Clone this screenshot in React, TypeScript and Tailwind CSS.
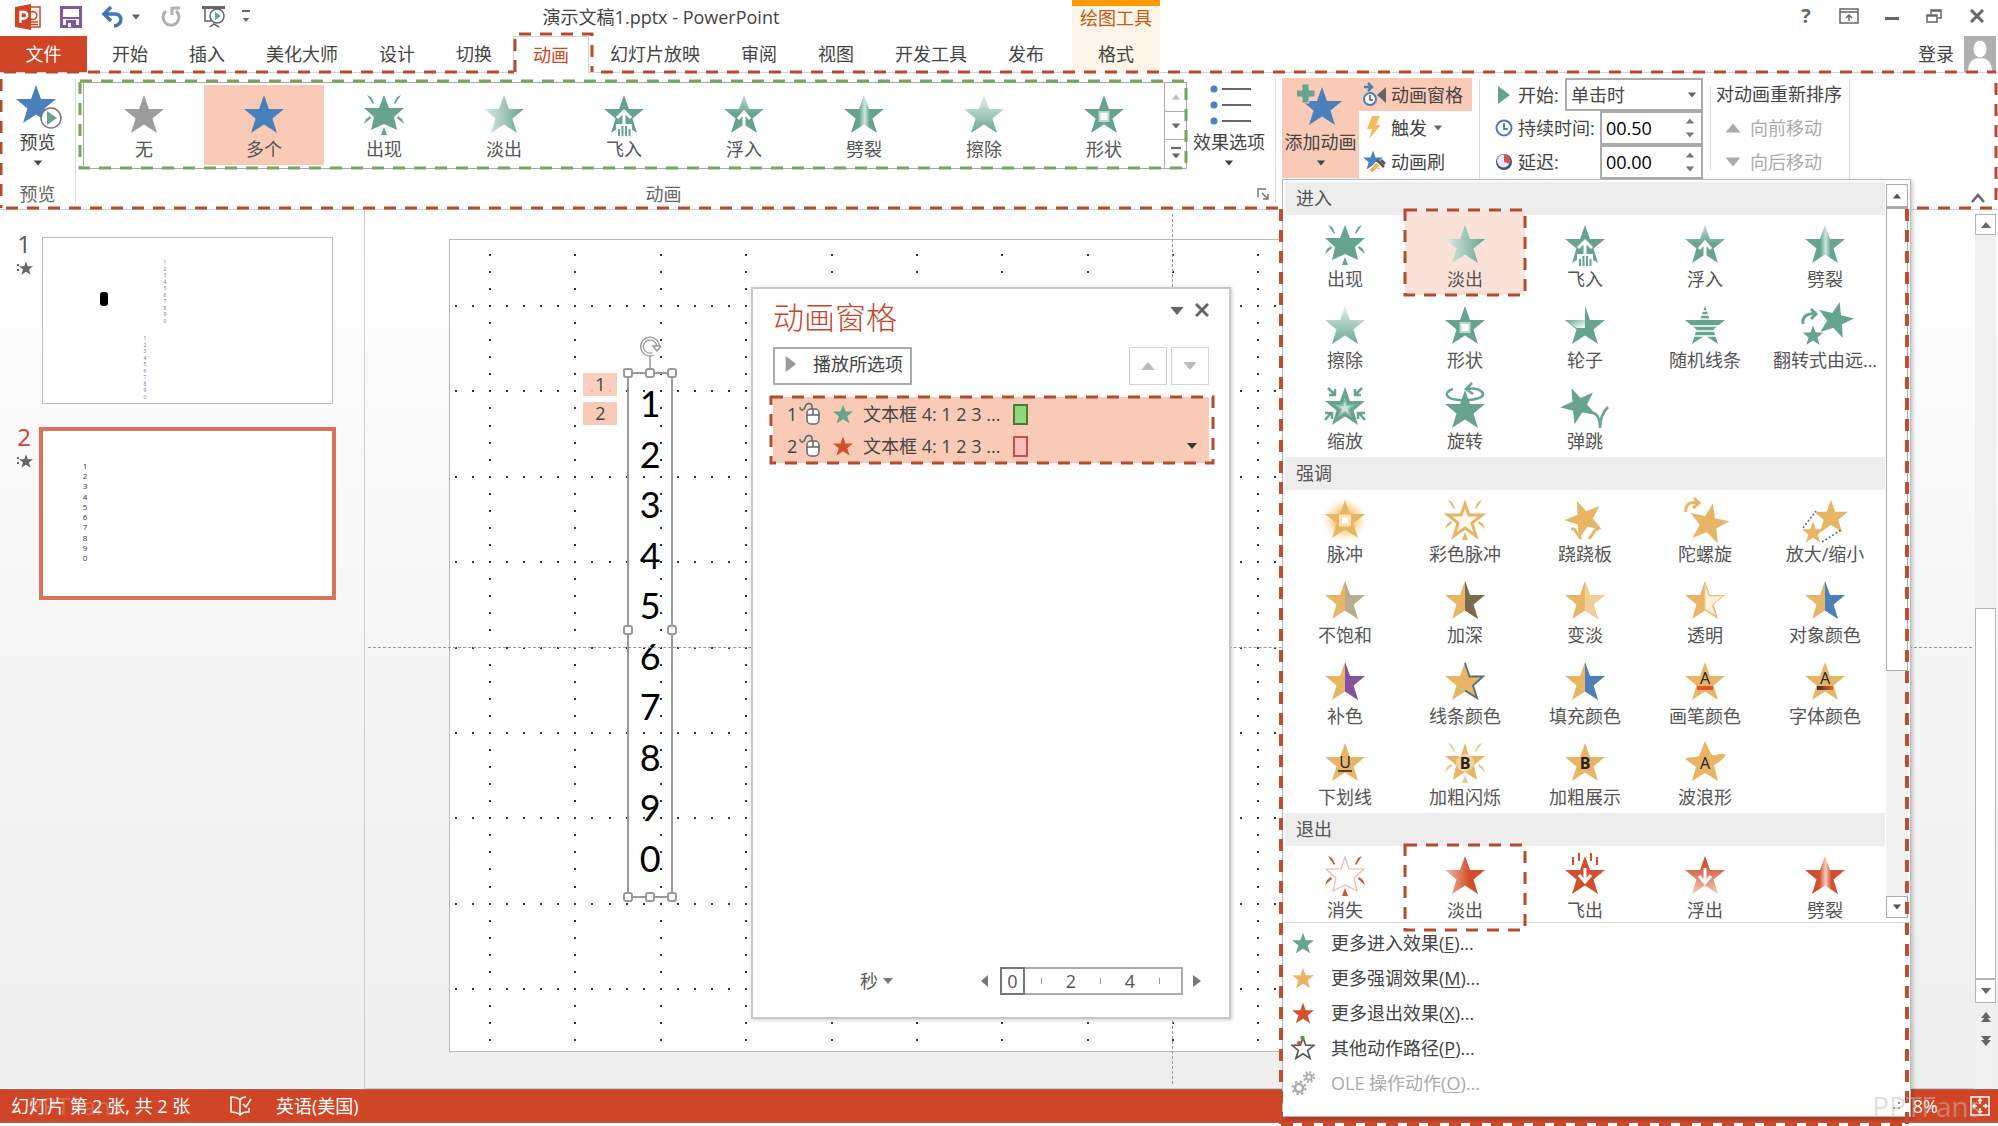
import { Fragment, type ReactNode } from "react";
import clsx from "clsx";

const STAR = "M20 1 L25 15 H40 L28.5 24.5 L33 39 L20 30.5 L7 39 L11.5 24.5 L0 15 H15 Z";
const RIGHT_HALF = "M20 1 L25 15 H40 L28.5 24.5 L33 39 L20 30.5 Z";

const GREEN = "#66a48f";
const GOLD = "#e8b565";
const RED = "#d2502e";
const BLUE = "#4a80bb";

type Effect = { label: string; icon: string };

const gallery: Effect[] = [
  { label: "无", icon: "none" },
  { label: "多个", icon: "multiple" },
  { label: "出现", icon: "appear" },
  { label: "淡出", icon: "fade" },
  { label: "飞入", icon: "flyIn" },
  { label: "浮入", icon: "floatIn" },
  { label: "劈裂", icon: "split" },
  { label: "擦除", icon: "wipe" },
  { label: "形状", icon: "shape" },
];

const entrance: Effect[] = [
  ...gallery.slice(2),
  { label: "轮子", icon: "wheel" },
  { label: "随机线条", icon: "bars" },
  { label: "翻转式由远...", icon: "growTurn" },
  { label: "缩放", icon: "zoom" },
  { label: "旋转", icon: "swivel" },
  { label: "弹跳", icon: "bounce" },
];

const emphasis: Effect[] = [
  { label: "脉冲", icon: "pulse" },
  { label: "彩色脉冲", icon: "colorPulse" },
  { label: "跷跷板", icon: "teeter" },
  { label: "陀螺旋", icon: "spin" },
  { label: "放大/缩小", icon: "growShrink" },
  { label: "不饱和", icon: "desaturate" },
  { label: "加深", icon: "darken" },
  { label: "变淡", icon: "lighten" },
  { label: "透明", icon: "transparency" },
  { label: "对象颜色", icon: "objectColor" },
  { label: "补色", icon: "complementary" },
  { label: "线条颜色", icon: "lineColor" },
  { label: "填充颜色", icon: "objectColor" },
  { label: "画笔颜色", icon: "brushColor" },
  { label: "字体颜色", icon: "fontColor" },
  { label: "下划线", icon: "underline" },
  { label: "加粗闪烁", icon: "boldFlash" },
  { label: "加粗展示", icon: "boldReveal" },
  { label: "波浪形", icon: "wave" },
];

const exit: Effect[] = [
  { label: "消失", icon: "disappear" },
  { label: "淡出", icon: "fadeOut" },
  { label: "飞出", icon: "flyOut" },
  { label: "浮出", icon: "floatOut" },
  { label: "劈裂", icon: "splitOut" },
];

const moreEffects = [
  { label: "更多进入效果", hotkey: "E", color: GREEN },
  { label: "更多强调效果", hotkey: "M", color: GOLD },
  { label: "更多退出效果", hotkey: "X", color: RED },
  { label: "其他动作路径", hotkey: "P", color: "path" },
  { label: "OLE 操作动作", hotkey: "O", color: "ole" },
];

const tabs = ["开始", "插入", "美化大师", "设计", "切换", "动画", "幻灯片放映", "审阅", "视图", "开发工具", "发布"];
const digits = ["1", "2", "3", "4", "5", "6", "7", "8", "9", "0"];

const Gradients = () => (
  <svg className="absolute size-0" aria-hidden="true">
    <defs>
      <linearGradient id="fade"><stop offset="0" stopColor="#dcebe6" /><stop offset="1" stopColor={GREEN} /></linearGradient>
      <linearGradient id="wipe" x2="0" y2="1"><stop offset="0" stopColor="#e3f0ec" /><stop offset="1" stopColor="#69a692" /></linearGradient>
      <linearGradient id="float" x2="0" y2="1"><stop offset="0" stopColor="#c3ddd5" /><stop offset=".5" stopColor={GREEN} /></linearGradient>
      <linearGradient id="split">
        <stop offset=".38" stopColor={GREEN} /><stop offset=".52" stopColor="#cfe5de" /><stop offset=".64" stopColor={GREEN} />
      </linearGradient>
      <linearGradient id="wheel" x2="1" y2="1"><stop offset="0" stopColor={GREEN} /><stop offset="1" stopColor="#ffffff" /></linearGradient>
      <radialGradient id="glow"><stop offset=".4" stopColor="#f5c56a" /><stop offset="1" stopColor="#fbe3b4" stopOpacity="0" /></radialGradient>
      <linearGradient id="fadeOut"><stop offset="0" stopColor="#f3bfae" /><stop offset=".6" stopColor={RED} /></linearGradient>
      <linearGradient id="floatOut" x2="0" y2="1"><stop offset=".2" stopColor={RED} /><stop offset="1" stopColor="#f5c7b9" /></linearGradient>
      <linearGradient id="splitOut">
        <stop offset=".36" stopColor={RED} /><stop offset=".52" stopColor="#f6cdbf" /><stop offset=".66" stopColor={RED} />
      </linearGradient>
      <linearGradient id="brush"><stop offset="0" stopColor="#333333" /><stop offset="1" stopColor="#e2603a" /></linearGradient>
    </defs>
  </svg>
);

const Rays = ({ color }: { color: string }) => (
  <path
    fill={color}
    d="M3 1 L7 3 L10 9 L9 10 Z M37 1 L33 3 L30 9 L31 10 Z M0 30 L2 25 L6 22 L7 24 Z M40 30 L38 25 L34 22 L33 24 Z M17 41 L20 33 L23 41 Z"
  />
);

const Letter = ({ children, bold, y = 27 }: { children: string; bold?: boolean; y?: number }) => (
  <text x="20" y={y} textAnchor="middle" fontSize="16" fontWeight={bold ? 700 : 400} fill="#222" fontFamily="Open Sans, sans-serif">
    {children}
  </text>
);

const half = (color: string) => (
  <>
    <path d={STAR} fill={GOLD} />
    <path d={RIGHT_HALF} fill={color} />
  </>
);

const drawings: Record<string, ReactNode> = {
  none: <path d={STAR} fill="#9d9d9d" />,
  multiple: <path d={STAR} fill={BLUE} />,
  appear: (
    <>
      <path d="M20 1 L25 14 H40 L30 23 L33 36 L20 30 L7 36 L10 23 L0 14 H15 Z" fill={GREEN} />
      <Rays color={GREEN} />
    </>
  ),
  fade: <path d={STAR} fill="url(#fade)" />,
  flyIn: (
    <>
      <path d={STAR} fill={GREEN} />
      <path d="M13 24 L20 17 L27 24 M20 18 V34" stroke="#fff" strokeWidth="3" fill="none" />
      <path d="M12 30 h16 v12 h-16 Z" fill="#fff" />
      <path d="M15 35 V42 M18.500 32 V42 M22 32 V42 M25.500 35 V42" stroke={GREEN} strokeWidth="2" />
    </>
  ),
  floatIn: (
    <>
      <path d={STAR} fill="url(#float)" />
      <path d="M14 25 L20 18 L26 25 M20 19 V33" stroke="#fff" strokeWidth="3" fill="none" />
    </>
  ),
  split: <path d={STAR} fill="url(#split)" />,
  wipe: <path d={STAR} fill="url(#wipe)" />,
  shape: (
    <>
      <path d={STAR} fill={GREEN} />
      <path d="M15.500 18 h9 v9 h-9 Z" fill="#fff" stroke="#b9d8ce" strokeWidth="2" />
    </>
  ),
  wheel: (
    <>
      <path d={STAR} fill={GREEN} />
      <path d="M20 0 V23 L10 20 L0 14 H14 Z" fill="#fff" />
      <path d="M20 23 L11.500 23 L0 15 H20 Z" fill="url(#wheel)" />
    </>
  ),
  bars: (
    <>
      <path d={STAR} fill={GREEN} />
      <path d="M0 6 H40 M0 10 H40 M0 14 H40 M0 21 H40 M0 26 H40 M0 31 H40" stroke="#fff" strokeWidth="1.600" />
    </>
  ),
  growTurn: (
    <>
      <path d={STAR} fill={GREEN} transform="translate(12 -4) rotate(14 20 20) scale(.9)" />
      <path d={STAR} fill={GREEN} stroke="#fff" strokeWidth="2" transform="translate(-4 18) scale(.6)" />
      <path d="M-2 19 C-3 12 2 8 9 9 M6 4 L11 9 L6 14" fill="none" stroke={GREEN} strokeWidth="3" />
    </>
  ),
  zoom: (
    <>
      <path d={STAR} fill={GREEN} />
      <path d={STAR} fill="#cfe3dc" stroke="#8dbfae" strokeWidth="4" transform="translate(11.500 13) scale(.42)" />
      <path
        d="M3 2 L10 9 M10 3 V9 H4 M37 2 L30 9 M30 3 V9 H36 M0 34 L6 27 M0 27 H7 V33 M40 34 L34 27 M40 27 H33 V33"
        fill="none"
        stroke={GREEN}
        strokeWidth="2.500"
      />
    </>
  ),
  swivel: (
    <>
      <path d={STAR} fill={GREEN} transform="translate(0 3)" />
      <path d="M8 3 C-2 6 0 13 14 14 C30 15 42 11 37 6 C34 3 28 2 22 3 M27 -3 L21 3 L28 8" fill="none" stroke={GREEN} strokeWidth="2.500" />
    </>
  ),
  bounce: (
    <>
      <path d={STAR} fill={GREEN} transform="translate(-4 -1) rotate(-24 20 20) scale(.9)" />
      <path d="M24 26 C32 26 35 32 35 42 C35 34 38 26 43 21" fill="none" stroke={GREEN} strokeWidth="2.500" />
    </>
  ),
  pulse: (
    <>
      <circle cx="20" cy="21" r="22" fill="url(#glow)" />
      <path d={STAR} fill={GOLD} />
      <path d="M15.500 17 h9 v9 h-9 Z" fill="#fff" stroke="#fbe3b4" strokeWidth="3" />
    </>
  ),
  colorPulse: (
    <>
      <path d="M20 5 L24 16 H37 L27 24 L31 37 L20 29 L9 37 L13 24 L3 16 H16 Z" fill="#fffaf0" stroke={GOLD} strokeWidth="3" />
      <Rays color={GOLD} />
    </>
  ),
  teeter: (
    <>
      <path d={STAR} fill={GOLD} transform="translate(0 -1) rotate(-22 20 20) scale(.95)" />
      <path d="M6 30 L9 30 L16 40 M34 30 L31 30 L24 40" fill="none" stroke={GOLD} strokeWidth="3" />
    </>
  ),
  spin: (
    <>
      <path d={STAR} fill={GOLD} transform="translate(4 3) rotate(12 20 20)" />
      <path d="M1 13 C0 6 5 2 12 4 M9 -1 L14 4 L8 9" fill="none" stroke={GOLD} strokeWidth="3" />
    </>
  ),
  growShrink: (
    <>
      <path d={STAR} fill={GOLD} transform="translate(9 0) scale(.85)" />
      <path d={STAR} fill={GOLD} transform="translate(-3 22) scale(.55)" />
      <path d="M-2 29 L11 12 M17 43 L36 31" stroke="#666" strokeWidth="1.500" strokeDasharray="2 2" />
    </>
  ),
  desaturate: half("#b8ac93"),
  darken: half("#7b6a4f"),
  lighten: half("#f3cf98"),
  transparency: (
    <>
      <path d={STAR} fill={GOLD} />
      <path d="M20 4 L24 16 H38 L27 25 L31 36 L20 29 Z" fill="#fdf0dc" stroke="#f0cd96" />
    </>
  ),
  objectColor: half(BLUE),
  complementary: half("#8552a1"),
  lineColor: (
    <>
      <path d={STAR} fill={GOLD} />
      <path d="M20 2 L24.500 15.500 H38 L28 24.500 L32 37 L20 29.500" fill="none" stroke="#4f7078" strokeWidth="1.800" />
    </>
  ),
  brushColor: (
    <>
      <path d={STAR} fill={GOLD} />
      <Letter y={23}>A</Letter>
      <path d="M12 25 h16 v4 h-16 Z" fill="#dd5631" />
    </>
  ),
  fontColor: (
    <>
      <path d={STAR} fill={GOLD} />
      <Letter y={23}>A</Letter>
      <path d="M12 25 h16 v4 h-16 Z" fill="url(#brush)" />
    </>
  ),
  underline: (
    <>
      <path d={STAR} fill={GOLD} />
      <Letter y={26}>U</Letter>
      <path d="M13 29 H27" stroke="#222" strokeWidth="1.500" />
    </>
  ),
  boldFlash: (
    <>
      <path d="M20 1 L24 14 H40 L29 23 L32 38 L20 30 L8 38 L11 23 L0 14 H16 Z" fill={GOLD} />
      <Rays color="#edc88d" />
      <circle cx="20" cy="21" r="9" fill="#f8e0b4" opacity=".7" />
      <Letter bold>B</Letter>
    </>
  ),
  boldReveal: (
    <>
      <path d={STAR} fill={GOLD} />
      <Letter bold>B</Letter>
    </>
  ),
  wave: (
    <>
      <path d="M20 -1 L26 12 C31 16 34 9 41 13 C38 17 35 20 29 23 L33 39 L20 31 L7 39 L11 25 L0 17 C6 14 10 16 14 14 Z" fill={GOLD} />
      <Letter>A</Letter>
    </>
  ),
  disappear: (
    <>
      <path d="M20 2 L24 14 H39 L29 23 L32 36 L20 30 L8 36 L11 23 L1 14 H16 Z" fill="#fff" stroke="#edb8a9" strokeWidth="1.200" />
      <Rays color={RED} />
    </>
  ),
  fadeOut: <path d={STAR} fill="url(#fadeOut)" />,
  flyOut: (
    <>
      <path d={STAR} fill={RED} />
      <path d="M20 13 V26 M14 20 L20 27 L26 20" stroke="#fff" strokeWidth="3" fill="none" />
      <path d="M8 2 V10 M14 -2 V6 M26 -2 V6 M32 2 V10" stroke={RED} strokeWidth="2" />
    </>
  ),
  floatOut: (
    <>
      <path d={STAR} fill="url(#floatOut)" />
      <path d="M20 13 V27 M14 21 L20 28 L26 21" stroke="#fff" strokeWidth="3" fill="none" />
    </>
  ),
  splitOut: <path d={STAR} fill="url(#splitOut)" />,
};

const EffectIcon = ({ name }: { name: string }) => (
  <svg viewBox="0 0 40 40" className="size-10 overflow-visible">
    {drawings[name]}
  </svg>
);

const triangles = {
  up: "M0 9 L5 3 L10 9 Z",
  down: "M0 3 L5 9 L10 3 Z",
  left: "M9 0 L2 6 L9 12 Z",
  right: "M1 0 L9 6 L1 12 Z",
};

const Triangle = ({ dir = "down", className = "size-2.5 text-[#666]" }: { dir?: keyof typeof triangles; className?: string }) => (
  <svg viewBox="0 0 10 12" className={clsx("shrink-0", className)} aria-hidden="true">
    <path d={triangles[dir]} fill="currentColor" />
  </svg>
);

const Dashed = ({ color = "#b54a2e", className = "inset-0" }: { color?: string; className?: string }) => (
  <div className={clsx("pointer-events-none absolute", className)}>
    <svg className="block size-full overflow-visible">
      <rect width="100%" height="100%" fill="none" stroke={color} strokeWidth="3" strokeDasharray="12 9" />
    </svg>
  </div>
);

const EffectButton = ({ effect, children }: { effect: Effect; children?: ReactNode }) => (
  <button className="relative flex w-full flex-col items-center pt-[9px] text-[#555]">
    {children}
    <span className="relative">
      <EffectIcon name={effect.icon} />
    </span>
    <span className="relative mt-[3px] whitespace-nowrap leading-6">{effect.label}</span>
  </button>
);

const BigButton = ({ icon, label, className }: { icon: ReactNode; label: string; className?: string }) => (
  <button className={clsx("mt-[5px] flex h-[100px] shrink-0 flex-col items-center pt-1.5", className)}>
    <svg viewBox="0 0 48 46" className="h-[46px] w-12">
      {icon}
    </svg>
    <span className="whitespace-nowrap leading-6">{label}</span>
    <Triangle className="mt-1 size-2.5" />
  </button>
);

const TitleBar = () => (
  <div className="flex h-9 items-center pb-0.5">
    <div className="flex items-center pl-[15px]">
      <svg viewBox="0 0 26 26" className="size-[26px]">
        <path d="M13 3 h12 v20 h-12 Z" fill="#fff" stroke="#d04526" strokeWidth="1.500" />
        <path d="M16 8 a4 4 0 1 1 0 7 M16 18 h7 M16 20.500 h7" stroke="#d04526" strokeWidth="1.500" fill="none" />
        <path d="M0 3 L16 0 V26 L0 23 Z" fill="#d04526" />
        <path d="M5.500 19 V8 h3.500 a3.200 3.200 0 0 1 0 6.500 h-3" fill="none" stroke="#fff" strokeWidth="2.400" />
      </svg>
      <button className="ml-[19px]" aria-label="保存">
        <svg viewBox="0 0 22 22" className="size-[22px]">
          <path d="M1.500 1.500 h19 v19 h-19 Z" fill="#fff" stroke="#7f57a2" strokeWidth="3" />
          <path d="M2 11 h18 v2 h-18 Z M6 14 h10 v7 h-10 Z" fill="#7f57a2" />
          <path d="M8 17 h3 v4 h-3 Z" fill="#fff" />
        </svg>
      </button>
      <button className="ml-[19px] flex items-center gap-1.5" aria-label="撤消">
        <svg viewBox="0 0 24 22" className="h-[22px] w-6">
          <path d="M10 1 L3 8 L10 15 M3 8 H14 C22 8 22 19 13 20" fill="none" stroke="#3f78b5" strokeWidth="3.500" />
        </svg>
        <Triangle />
      </button>
      <button className="ml-[19px]" aria-label="重复">
        <svg viewBox="0 0 22 22" className="size-[22px]">
          <path d="M6 5 A8 8 0 1 0 16 5 M12 1 V9 M12 2 H20" fill="none" stroke="#b0b0b0" strokeWidth="3" />
        </svg>
      </button>
      <button className="ml-5" aria-label="从头开始">
        <svg viewBox="0 0 24 24" className="size-6" fill="none" stroke="#666" strokeWidth="1.500">
          <path d="M0 2.500 H23" strokeWidth="3" />
          <path d="M3 4 V16 H9 M8 22 L12 19 L17 22" />
          <circle cx="15" cy="11" r="7" fill="#fff" />
          <path d="M13 7 L19 11 L13 15 Z" fill={GREEN} stroke="none" />
        </svg>
      </button>
      <button className="ml-4 flex flex-col items-center" aria-label="自定义快速访问工具栏">
        <span className="h-0.5 w-2 bg-[#666]" />
        <Triangle className="mt-1 size-2 text-[#666]" />
      </button>
    </div>
    <h1 className="flex-1 text-center font-normal">演示文稿1.pptx - PowerPoint</h1>
  </div>
);

const Header = () => (
  <header className="flex h-[73px]">
    <div className="flex flex-1 flex-col">
      <TitleBar />
      <nav className="flex h-[37px] gap-px border-b border-[#d4d4d4]">
        <button className="mr-1 w-[87px] bg-[#d04526] text-white">文件</button>
        {tabs.map((tab) => (
          <button
            key={tab}
            className={clsx(
              "whitespace-nowrap px-5",
              tab === "动画" && "-mb-px border border-b-0 border-[#d4d4d4] bg-white px-[19px] text-[#d04526]"
            )}
          >
            {tab}
          </button>
        ))}
      </nav>
    </div>
    <div className="flex w-[88px] flex-col border-t-[6px] border-[#ff9b00] bg-[#fdf5e8] text-center">
      <span className="leading-6 text-[#c55a11]">绘图工具</span>
      <button className="mt-3 leading-6">格式</button>
    </div>
    <div className="flex flex-1 flex-col border-b border-[#d4d4d4] min-[1200px]:max-w-[838px]">
      <div className="ml-auto flex h-9 items-center pb-1 text-[#666]">
        <button className="w-[42px] text-xl font-bold">?</button>
        <button className="flex w-[43px] justify-center" aria-label="功能区显示选项">
          <svg viewBox="0 0 20 16" className="h-4 w-5" fill="none" stroke="currentColor" strokeWidth="1.500">
            <path d="M1 1 h18 v14 h-18 Z M1 4 H19 M10 13 V7 M7 10 L10 7 L13 10" />
          </svg>
        </button>
        <button className="flex w-[43px] justify-center" aria-label="最小化">
          <span className="mt-1 h-[3px] w-3.5 bg-[#666]" />
        </button>
        <button className="flex w-[42px] justify-center" aria-label="还原">
          <svg viewBox="0 0 16 16" className="size-4" fill="none" stroke="currentColor" strokeWidth="1.500">
            <path d="M1 7 h10 v7 h-10 Z M1 8 H11 M5 6 V2 H15 V10 H12 M5 3 H15" />
          </svg>
        </button>
        <button className="flex w-[43px] justify-center" aria-label="关闭">
          <svg viewBox="0 0 14 14" className="size-3.5" stroke="currentColor" strokeWidth="3">
            <path d="M1 1 L13 13 M13 1 L1 13" />
          </svg>
        </button>
      </div>
      <div className="ml-auto flex items-center gap-2.5 pr-0.5">
        <a href="#login">登录</a>
        <svg viewBox="0 0 32 36" className="h-9 w-8">
          <path d="M0 0 h32 v36 h-32 Z" fill="#b0b0b0" />
          <path d="M4 36 C4 26 9 22 16 22 C23 22 28 26 28 36 Z" fill="#fff" />
          <ellipse cx="16" cy="13" rx="7" ry="9" fill="#fff" stroke="#b0b0b0" />
        </svg>
      </div>
    </div>
  </header>
);

const Spinner = ({ id, value }: { id: string; value: string }) => (
  <div className="ml-auto flex h-[34px] w-[103px] items-center border-2 border-[#ababab] bg-white">
    <input id={id} defaultValue={value} className="w-full min-w-0 bg-transparent pl-1 text-black outline-none" />
    <span className="flex flex-col gap-1 pr-1.5">
      <button aria-label="增加" className="flex"><Triangle dir="up" className="size-2.5 text-[#777]" /></button>
      <button aria-label="减少" className="flex"><Triangle className="size-2.5 text-[#777]" /></button>
    </span>
  </div>
);

const clock = (
  <>
    <circle cx="9" cy="9" r="7.500" fill="#fff" stroke={BLUE} strokeWidth="2" />
    <path d="M9 4 V10 H13" fill="none" stroke="#555" strokeWidth="1.500" />
  </>
);

const EffectSection = ({ title, effects, last }: { title: string; effects: Effect[]; last?: boolean }) => (
  <section className={last ? "" : "pb-1"}>
    <h2 className="bg-[#ededed] pl-[11px] font-normal leading-[33px] text-[#555]">{title}</h2>
    <div className="grid grid-cols-5 gap-y-[5px]">
      {effects.map((effect) => (
        <EffectButton key={effect.label} effect={effect}>
          {effect.icon === "fade" && (
            <span className="absolute inset-x-0 -bottom-1 -top-[5px] bg-[#fbe2d9]">
              <Dashed />
            </span>
          )}
          {effect.icon === "fadeOut" && <Dashed className="inset-x-0 -bottom-2 -top-px" />}
        </EffectButton>
      ))}
    </div>
  </section>
);

const MoreIcon = ({ color }: { color: string }) => {
  if (color === "ole") {
    return (
      <svg viewBox="0 0 24 24" className="size-6" fill="none" stroke="#aaa">
        <circle cx="8" cy="17" r="4" strokeWidth="2.500" />
        <circle cx="8" cy="17" r="6.500" strokeWidth="2" strokeDasharray="2.500 2.600" />
        <circle cx="18" cy="6" r="2.800" strokeWidth="2" />
        <circle cx="18" cy="6" r="5" strokeWidth="2" strokeDasharray="2 1.900" />
      </svg>
    );
  }
  const isPath = color === "path";
  return (
    <svg viewBox="-2 -2 44 44" className="size-6">
      <path d={STAR} fill={isPath ? "#fff" : color} stroke={isPath ? "#555" : "none"} strokeWidth="3" />
      {isPath && (
        <>
          <circle cx="19" cy="1" r="4" fill="#4f9d55" />
          <circle cx="13" cy="11" r="4" fill={RED} />
        </>
      )}
    </svg>
  );
};

const EffectMenu = () => (
  <div className="absolute left-0 top-[101px] z-20 w-[629px] border border-[#b8b8b8] bg-white shadow-[2px_2px_4px_rgba(0,0,0,0.2)]">
    <div className="flex border-b border-[#d9d9d9] pl-0.5 pt-0.5">
      <div className="w-[600px]">
        <EffectSection title="进入" effects={entrance} />
        <EffectSection title="强调" effects={emphasis} />
        <EffectSection title="退出" effects={exit} last />
      </div>
      <div className="mb-1 ml-px mt-0.5 flex w-[22px] flex-col bg-[#f2f2f2]">
        <button aria-label="向上滚动" className="flex h-[23px] items-center justify-center border border-[#ababab] bg-white">
          <Triangle dir="up" className="size-2.5 text-[#555]" />
        </button>
        <span className="h-[464px] border border-t-2 border-[#ababab] bg-white" />
        <button aria-label="向下滚动" className="mt-auto flex h-[22px] items-center justify-center border border-[#ababab] bg-white">
          <Triangle className="size-2.5 text-[#555]" />
        </button>
      </div>
    </div>
    <ul className="pb-4 pt-0.5">
      {moreEffects.map(({ label, hotkey, color }) => (
        <li key={hotkey}>
          <button disabled={color === "ole"} className="flex h-[35px] w-full items-center gap-4 pl-2 text-[#444] disabled:text-[#aaa]">
            <MoreIcon color={color} />
            <span>
              {label}(<u className="underline-offset-2">{hotkey}</u>)...
            </span>
          </button>
        </li>
      ))}
    </ul>
    <svg viewBox="0 0 10 10" className="absolute bottom-1 right-2 size-2.5" fill="#888">
      <path d="M6 0 h2 v2 h-2 Z M1 5 h2 v2 h-2 Z M6 5 h2 v2 h-2 Z" />
    </svg>
    <div className="pointer-events-none absolute -bottom-2 -left-0.5 right-[3px] top-[29px]">
      <svg className="block size-full overflow-visible" stroke="#c24c2e" strokeWidth="4" strokeDasharray="12 9">
        <line x1="0" y1="0" x2="0" y2="100%" />
        <line x1="100%" y1="0" x2="100%" y2="100%" />
        <line x1="0" y1="100%" x2="100%" y2="100%" />
      </svg>
    </div>
  </div>
);

const Ribbon = () => (
  <div className="flex h-[137px] border-b border-[#d4d4d4]">
    <section className="flex w-[75px] flex-col items-center">
      <BigButton
        label="预览"
        icon={
          <>
            <path d={STAR} fill={BLUE} transform="translate(2 0)" />
            <circle cx="37" cy="34" r="10" fill="#fff" stroke="#777" strokeWidth="1.500" />
            <path d="M33 27 L43 34 L33 41 Z" fill={GREEN} />
          </>
        }
      />
      <span className="mt-auto pb-[3px] leading-6 text-[#666]">预览</span>
    </section>
    <span className="my-[6px] w-px bg-[#dcdcdc]" />
    <section className="flex flex-1 flex-col">
      <div className="flex">
        <div className="relative ml-[7px] mt-[9px] flex h-[87px] flex-1 border border-[#ababab]">
          <div className="flex flex-1 pb-[3px] pt-0.5">
            {gallery.map((effect) => (
              <div key={effect.label} className={clsx("flex-1", effect.icon === "multiple" && "bg-[#f9cbb6]")}>
                <EffectButton effect={effect} />
              </div>
            ))}
          </div>
          <div className="flex w-[22px] flex-col divide-y divide-[#ababab] border-l border-[#ababab]">
            <button aria-label="上一行" className="flex flex-1 items-center justify-center">
              <Triangle dir="up" className="size-2.5 text-[#bbb]" />
            </button>
            <button aria-label="下一行" className="flex flex-1 items-center justify-center"><Triangle /></button>
            <button aria-label="其他" className="flex flex-1 flex-col items-center justify-center">
              <span className="h-0.5 w-2.5 bg-[#666]" />
              <Triangle className="mt-0.5 size-2.5 text-[#666]" />
            </button>
          </div>
          <Dashed color="#78a45c" className="-left-1 -top-0.5 bottom-0 right-0" />
        </div>
        <BigButton
          label="效果选项"
          className="w-[88px] pr-1"
          icon={
            <>
              <path d="M17 5 H46 M17 21 H46 M17 37 H46" stroke="#666" strokeWidth="1.800" />
              <g fill={BLUE}>
                <circle cx="9" cy="5" r="3.500" />
                <circle cx="9" cy="21" r="3.500" />
                <circle cx="9" cy="37" r="3.500" />
              </g>
            </>
          }
        />
      </div>
      <div className="mt-auto flex items-center pb-[3px] leading-6 text-[#666]">
        <span className="flex-1 text-center">动画</span>
        <button aria-label="动画选项" className="flex w-6 pl-1.5">
          <svg viewBox="0 0 12 12" className="size-3" fill="none" stroke="#777" strokeWidth="1.500">
            <path d="M1 9 V1 H9 M5 5 L10 10 M11 6 V11 H6" />
          </svg>
        </button>
      </div>
    </section>
    <span className="my-[6px] w-px bg-[#dcdcdc]" />
    <section className="relative flex w-[203px] pl-[6px]">
      <div className="relative">
        <BigButton
          label="添加动画"
          className="w-[77px] bg-[#f9cbb6]"
          icon={
            <>
              <path d={STAR} fill={BLUE} transform="translate(5 2)" />
              <path d="M6 -1 h7 v6 h6 v7 h-6 v6 h-7 v-6 h-6 v-7 h6 Z" fill={GREEN} stroke="#f9cbb6" transform="translate(-1 1)" />
            </>
          }
        />
        <div className="absolute left-0 top-[5px]">
          <EffectMenu />
        </div>
      </div>
      <div className="mt-[5px] flex flex-1 flex-col pr-[7px]">
        <button className="flex h-[33px] items-center gap-1 whitespace-nowrap bg-[#f9cbb6] pl-1">
          <svg viewBox="0 0 24 26" className="h-[26px] w-6" fill="none">
            <path d="M1 5 H8 M5 1 L9 5 L5 9" stroke={BLUE} strokeWidth="2.500" />
            <circle cx="7" cy="17" r="6" fill="#fff" stroke={BLUE} strokeWidth="2" />
            <path d="M7 13 V18 H10" stroke="#555" strokeWidth="1.500" />
            <path d="M14 13 L23 5 V21 Z" fill="#666" />
          </svg>
          动画窗格
        </button>
        <button className="flex h-[34px] items-center gap-1.5 whitespace-nowrap pl-1.5">
          <svg viewBox="0 0 20 24" className="h-6 w-5">
            <path d="M7 0 H15 L11 9 H16 L4 23 L7 13 H2 Z" fill="#f0bd5e" />
          </svg>
          触发
          <Triangle />
        </button>
        <button className="flex h-[33px] items-center gap-1 whitespace-nowrap pl-1">
          <svg viewBox="0 0 24 24" className="size-6">
            <path d={STAR} fill={BLUE} transform="scale(.5)" />
            <path d="M6 20 L13 12 L17 16 L9 23 Z" fill={GOLD} stroke="#fff" />
            <path d="M14 10 L21 17 M18 10 L22 14" stroke="#555" strokeWidth="2.500" />
          </svg>
          动画刷
        </button>
      </div>
    </section>
    <span className="my-[6px] w-px bg-[#dcdcdc]" />
    <section className="mt-[5px] w-[230px] pl-[15px] pr-[7px]">
      <div className="flex h-[33px] items-center whitespace-nowrap">
        <Triangle dir="right" className="mr-[5px] size-[18px] text-[#66a48f]" />
        <label htmlFor="start">开始:</label>
        <div className="relative ml-auto h-[33px] w-[138px]">
          <select id="start" className="size-full appearance-none border-2 border-[#ababab] bg-white pl-1 outline-none">
            <option>单击时</option>
          </select>
          <Triangle className="absolute right-1.5 top-3 size-2.5 text-[#666]" />
        </div>
      </div>
      <div className="flex h-[34px] items-center whitespace-nowrap">
        <svg viewBox="0 0 18 18" className="mr-[5px] size-[18px]">{clock}</svg>
        <label htmlFor="duration">持续时间:</label>
        <Spinner id="duration" value="00.50" />
      </div>
      <div className="flex h-[34px] items-center whitespace-nowrap">
        <svg viewBox="0 0 18 18" className="mr-[5px] size-[18px]">
          <circle cx="9" cy="9" r="8" fill="#3c4d85" />
          <circle cx="8.500" cy="8" r="6.500" fill="#e5e8f2" />
          <path d="M9 9 V1.500 A7 7 0 0 1 15 11 Z" fill="#d2554f" />
        </svg>
        <label htmlFor="delay">延迟:</label>
        <Spinner id="delay" value="00.00" />
      </div>
    </section>
    <section className="relative mt-[5px] w-[139px] pl-1.5">
      <span className="absolute left-0 top-2 h-[84px] w-px bg-[#dcdcdc]" />
      <h2 className="whitespace-nowrap font-normal leading-[33px]">对动画重新排序</h2>
      <button disabled className="flex h-[34px] items-center gap-2 whitespace-nowrap pl-2 text-[#aaa]">
        <Triangle dir="up" className="size-[18px]" />
        向前移动
      </button>
      <button disabled className="flex h-[34px] items-center gap-2 whitespace-nowrap pl-2 text-[#aaa]">
        <Triangle className="size-[18px]" />
        向后移动
      </button>
    </section>
    <span className="my-[6px] w-px bg-[#dcdcdc]" />
    <div className="flex w-[148px] items-end justify-end pb-1.5 pr-[13px]">
      <button aria-label="折叠功能区">
        <svg viewBox="0 0 14 10" className="h-2.5 w-3.5" fill="none" stroke="#666" strokeWidth="2.500">
          <path d="M1 9 L7 2 L13 9" />
        </svg>
      </button>
    </div>
  </div>
);

const RibbonOutline = () => (
  <div className="pointer-events-none absolute inset-y-0 left-0 right-0.5">
    <svg className="block size-full overflow-visible" fill="none" stroke="#b54a2e" strokeWidth="3" strokeDasharray="12 9">
      <line x1="4" y1="72" x2="514" y2="72" />
      <path d="M515 72 V34 H592 V72" />
      <line x1="601" y1="72" x2="100%" y2="72" />
      <line x1="1" y1="79" x2="1" y2="208" />
      <line x1="100%" y1="83" x2="100%" y2="208" />
      <line x1="6" y1="208" x2="100%" y2="208" />
    </svg>
  </div>
);

const DigitColumn = ({ className }: { className: string }) => (
  <div className={clsx("absolute flex flex-col justify-between text-center", className)}>
    {digits.map((d) => (
      <span key={d}>{d}</span>
    ))}
  </div>
);

const Thumb = ({ number, active, children }: { number: number; active?: boolean; children: ReactNode }) => (
  <li className="flex">
    <div className={clsx("flex w-[39px] flex-col items-end pr-1.5 text-2xl", active ? "pt-[3px] text-[#c8452b]" : "text-[#555]")}>
      <span className="pr-0.5 leading-[14px]">{number}</span>
      <svg viewBox="0 0 16 14" className="mt-2.5 h-3.5 w-4" fill="#666">
        <path d={STAR} transform="translate(2 0) scale(.35)" />
        <path d="M0 3 h2 v2 h-2 Z M0 8 h2 v2 h-2 Z" />
      </svg>
    </div>
    <button
      aria-label={`幻灯片 ${number}`}
      className={clsx("relative flex-1 bg-white", active ? "h-[173px] border-4 border-[#d9735a]" : "mx-[3px] h-[167px] border border-[#bdbdbd]")}
    >
      {children}
    </button>
  </li>
);

const SlidePane = () => (
  <aside className="w-[365px] shrink-0 border-r border-[#cfcfcf] pr-7 pt-[27px]">
    <ul className="flex flex-col gap-[23px]">
      <Thumb number={1}>
        <span className="absolute left-[57px] top-[54px] h-3.5 w-2 rounded-[3px] bg-black" />
        <DigitColumn className="left-[120px] top-[22px] h-16 w-1 text-[5px] leading-[5px] text-gray-500" />
        <DigitColumn className="left-[100px] top-[98px] h-16 w-1 text-[5px] leading-[5px] text-gray-500" />
      </Thumb>
      <Thumb number={2} active>
        <DigitColumn className="left-[39px] top-[30px] h-[102px] w-1.5 text-[8px] leading-[10px] text-[#333]" />
      </Thumb>
    </ul>
  </aside>
);

// dotted grid, one major cell is 5 minor steps
const MAJOR = 85.375;
const MINOR = MAJOR / 5;

const gridDots = () => {
  let d = "";
  for (let r = -3; r < 44; r++) {
    for (let c = -2; c < 83; c++) {
      if (r % 5 !== 0 && c % 5 !== 0) continue;
      d += `M${Math.round(39 + c * MINOR)} ${Math.round(65 + r * MINOR)}h2v2h-2z`;
    }
  }
  return d;
};

const handles = [
  "-left-1.5 -top-1.5",
  "left-4 -top-1.5",
  "-right-1.5 -top-1.5",
  "-left-1.5 top-[48%]",
  "-right-1.5 top-[48%]",
  "-left-1.5 -bottom-1.5",
  "left-4 -bottom-1.5",
  "-right-1.5 -bottom-1.5",
];

const rows = [
  { order: 1, color: GREEN, box: "border-[#4a7a3a] bg-[#92d87c]" },
  { order: 2, color: RED, box: "border-[#c0504d] bg-[#fbc0bd]" },
];

const AnimationPane = () => (
  <section className="absolute left-[386px] top-[77px] flex h-[732px] w-[480px] flex-col border-2 border-[#c8c8c8] bg-white px-5 shadow-[1px_1px_4px_rgba(0,0,0,0.2)]">
    <div className="flex items-start pt-2">
      <h2 className="flex-1 text-[31px] font-light leading-10 text-[#c8452b]">动画窗格</h2>
      <button aria-label="任务窗格选项" className="pt-1.5"><Triangle className="size-4 text-[#666]" /></button>
      <button aria-label="关闭窗格" className="ml-2.5 pt-1.5">
        <svg viewBox="0 0 14 14" className="size-3.5" stroke="#666" strokeWidth="3">
          <path d="M1 1 L13 13 M13 1 L1 13" />
        </svg>
      </button>
    </div>
    <div className="mt-2.5 flex gap-1">
      <button className="mr-auto flex h-[38px] w-[139px] items-center gap-3.5 whitespace-nowrap border-2 border-[#ababab] pb-1 pl-2 text-[#444]">
        <Triangle dir="right" className="size-4 text-[#999]" />
        播放所选项
      </button>
      <button aria-label="上移" className="flex h-[38px] w-[38px] items-center justify-center border border-[#d4d4d4]">
        <Triangle dir="up" className="size-4 text-[#bbb]" />
      </button>
      <button aria-label="下移" className="flex h-[38px] w-[38px] items-center justify-center border border-[#d4d4d4]">
        <Triangle className="size-4 text-[#bbb]" />
      </button>
    </div>
    <ol className="relative mt-3 bg-[#f9cbb6] py-px">
      {rows.map(({ order, color, box }) => (
        <li key={order} className="flex h-8 items-center pl-3.5 pr-[11px] text-[#444]">
          <span className="w-3">{order}</span>
          <svg viewBox="0 0 22 24" className="h-6 w-[22px]" fill="none" stroke="#666" strokeWidth="1.500">
            <path d="M1 5 C1 9 5 9 6 5 C7 1 12 0 13 4 V7" />
            <rect x="8" y="7" width="12" height="15" rx="4" fill="#fff" />
            <path d="M8 13 H20 M14 7 V13" />
          </svg>
          <svg viewBox="0 0 40 40" className="ml-3 size-5"><path d={STAR} fill={color} /></svg>
          <span className="ml-2.5 w-[150px] whitespace-pre">文本框 4: 1 2 3 ...</span>
          <span className={clsx("h-[21px] w-[15px] border-2", box)} />
          {order === 2 && <Triangle className="ml-auto size-3 text-[#333]" />}
        </li>
      ))}
      <Dashed className="-left-0.5 -right-1 inset-y-0" />
    </ol>
    <div className="mt-auto flex items-center pb-[22px] text-[#555]">
      <button className="ml-[87px] flex items-center gap-1">
        秒
        <Triangle className="size-3 text-[#777]" />
      </button>
      <button aria-label="向左" className="ml-auto mr-2.5"><Triangle dir="left" className="size-3 text-[#777]" /></button>
      <div className="flex h-7 w-[183px] items-center border-2 border-[#ababab] text-center">
        <span className="-my-0.5 -ml-0.5 h-7 w-[25px] border-2 border-[#777] leading-6">0</span>
        {["2", "4", ""].map((n) => (
          <Fragment key={n}>
            <span className="ml-4 h-1.5 w-px bg-[#999]" />
            {n && <span className="ml-4 w-[26px]">{n}</span>}
          </Fragment>
        ))}
      </div>
      <button aria-label="向右" className="ml-2 mr-1.5"><Triangle dir="right" className="size-3 text-[#777]" /></button>
    </div>
  </section>
);

const Canvas = () => (
  <main className="relative flex-1 overflow-hidden border-b border-[#cfcfcf] pl-1 pt-[29px]">
    <div className="relative mx-auto aspect-video w-[90%] border border-[#b9b9b9] bg-white">
      <svg className="absolute inset-0 size-full"><path d={gridDots()} fill="#333" /></svg>
      <span className="absolute left-[133px] top-[133px] w-[34px] bg-[#f9cbb6]/90 text-center leading-[23px] text-[#444]">1</span>
      <span className="absolute left-[133px] top-[162px] w-[34px] bg-[#f9cbb6] text-center leading-[23px] text-[#444]">2</span>
      <div className="absolute left-[177px] top-[132px] h-[526px] w-[46px] border-2 border-[#999]">
        <svg viewBox="0 0 22 34" className="absolute -top-[38px] left-2.5 h-[34px] w-[22px]" fill="none" stroke="#999" strokeWidth="1.500">
          <path d="M11 20 V34" />
          <path d="M14 18 A8 8 0 1 1 19 10" strokeWidth="4" />
          <path d="M14 18 A8 8 0 1 1 19 10" stroke="#fff" strokeWidth="1.500" />
          <path d="M14 10 H22 L18 15 Z" fill="#fff" />
        </svg>
        <div className="flex h-full flex-col justify-between pb-[22px] pt-[13px] text-center font-['Lato'] text-4xl leading-8 text-black">
          {digits.map((d) => (
            <span key={d}>{d}</span>
          ))}
        </div>
        {handles.map((pos) => (
          <span key={pos} className={clsx("absolute size-2.5 rounded-[3px] border-2 border-[#999] bg-white", pos)} />
        ))}
      </div>
    </div>
    <span className="absolute inset-x-[3px] top-[437px] border-t border-dashed border-[#999]" />
    <span className="absolute bottom-1 left-[50.1%] top-1 border-l border-dashed border-[#999]" />
    <AnimationPane />
  </main>
);

const PageScroll = () => (
  <div className="mr-0.5 mt-1 flex w-[21px] flex-col items-center bg-[#f0f0f0] text-[#666]">
    <button aria-label="向上滚动" className="flex h-[21px] w-full items-center justify-center border border-[#b5b5b5] bg-white">
      <Triangle dir="up" className="size-3" />
    </button>
    <span className="w-full flex-1" />
    <span className="h-[371px] w-full border border-[#b5b5b5] bg-white" />
    <button aria-label="向下滚动" className="flex h-6 w-full items-center justify-center border border-[#b5b5b5] bg-white">
      <Triangle className="size-3" />
    </button>
    <button aria-label="上一张幻灯片" className="mt-1.5 flex flex-col">
      <Triangle dir="up" className="size-3" />
      <Triangle dir="up" className="-mt-2 size-3" />
    </button>
    <button aria-label="下一张幻灯片" className="mb-10 mt-2 flex flex-col">
      <Triangle className="size-3" />
      <Triangle className="-mt-2 size-3" />
    </button>
  </div>
);

const StatusBar = () => (
  <footer className="relative mb-[3px] flex h-[34px] items-center border-y border-[#a5655a] bg-[#d04526] pl-[11px] pr-2 text-white">
    <span className="w-[219px]">幻灯片 第 2 张, 共 2 张</span>
    <svg viewBox="0 0 22 20" className="h-5 w-[22px]" fill="none" stroke="#fff" strokeWidth="1.500">
      <path d="M10 4 C7 1 4 1 1 1 V16 C5 16 8 17 10 19 C12 17 13 16 16 16 H19 V12 M10 4 V19 M10 4 C12 1 14 1 16 1 M13 8 L16 11 L21 3" />
    </svg>
    <button className="ml-6">英语(美国)</button>
    <span className="ml-auto">8%</span>
    <button aria-label="使幻灯片适应当前窗口" className="ml-8">
      <svg viewBox="0 0 20 20" className="size-5" fill="none" stroke="#fff" strokeWidth="1.500">
        <path d="M1 1 h18 v18 h-18 Z M10 3 V8 M8 5 L10 3 L12 5 M10 17 V12 M8 15 L10 17 L12 15 M3 10 H7 M5 8 L3 10 L5 12 M17 10 H13 M15 8 L17 10 L15 12" />
      </svg>
    </button>
    <span className="pointer-events-none absolute left-7 text-2xl text-white/20">PPTFans</span>
    <span className="pointer-events-none absolute right-4 z-30 text-[28px] leading-8 text-[#c9b9b5]/50">PPTFans</span>
  </footer>
);

const App = () => (
  <div className='relative flex min-h-screen flex-col overflow-hidden bg-white font-["Open_Sans","Noto_Sans_CJK_SC",sans-serif] text-lg leading-6 text-[#444]'>
    <Gradients />
    <Header />
    <Ribbon />
    <RibbonOutline />
    <div className="flex flex-1 bg-linear-to-b from-[#fefefe] to-[#eeeeee]">
      <SlidePane />
      <Canvas />
      <PageScroll />
    </div>
    <StatusBar />
  </div>
);

export default App;
